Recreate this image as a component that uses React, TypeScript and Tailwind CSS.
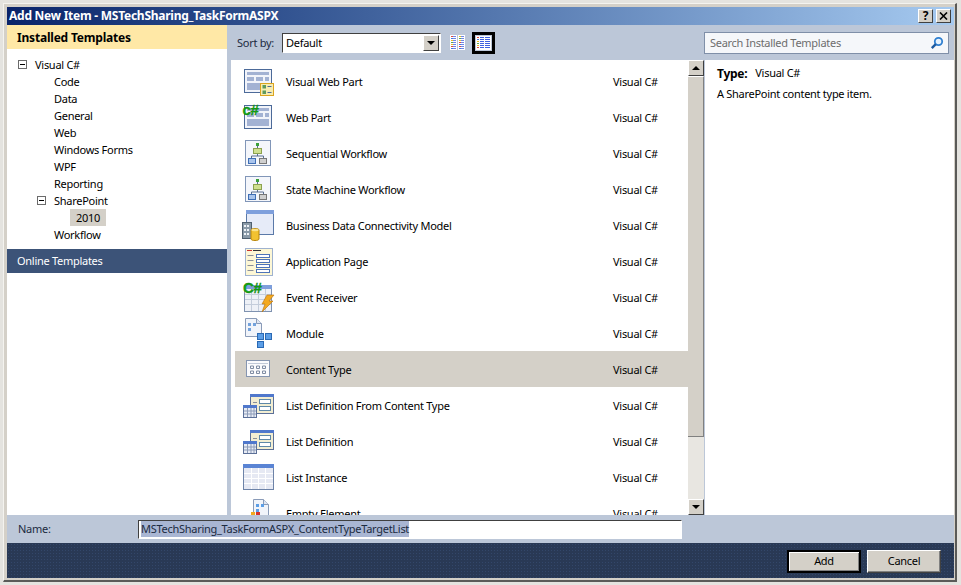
const font = "font-['Noto_Sans','Liberation_Sans',sans-serif]";

function Shell({ children }: { children: React.ReactNode }) {
  return (
    <svg width="32" height="32" viewBox="0 0 32 32" className="overflow-visible shrink-0">
      {children}
    </svg>
  );
}

function CSharp({ x = 0, y = 13, label = "c#" }: { x?: number; y?: number; label?: string }) {
  return (
    <text x={x} y={y} fontFamily="'Liberation Sans', sans-serif" fontWeight="700" fontSize="15" fill="#14a314" stroke="#0b7f0b" strokeWidth="0.3">
      {label}
    </text>
  );
}

function PartBody() {
  return (
    <>
      <rect x="1.5" y="4.5" width="27" height="23" fill="#f2f4fa" stroke="#4c6a99" />
      <rect x="4" y="7" width="22" height="3" fill="#a3b2d3" />
      <rect x="4" y="12" width="7" height="4" fill="#a3b2d3" />
      <rect x="13" y="12" width="7" height="4" fill="#a3b2d3" />
      <rect x="22" y="12" width="4" height="4" fill="#a3b2d3" />
      <rect x="4" y="18" width="22" height="7" fill="#a3b2d3" />
    </>
  );
}

function VisualWebPart() {
  return (
    <Shell>
      <PartBody />
      <rect x="17.5" y="18.5" width="13" height="12" fill="#f7ecb0" stroke="#dba41f" />
      <rect x="19.5" y="20" width="3.5" height="3.5" fill="#5e9a5e" />
      <rect x="19.5" y="25.5" width="3.5" height="3.5" fill="#5e9a5e" />
      <rect x="24.5" y="21" width="4" height="1" fill="#4c6a99" />
      <rect x="24.5" y="27" width="4" height="1" fill="#4c6a99" />
    </Shell>
  );
}

function WebPart() {
  return (
    <Shell>
      <PartBody />
      <CSharp x={-0.5} y={14} />
    </Shell>
  );
}

function Workflow() {
  return (
    <Shell>
      <rect x="2.5" y="3.5" width="25" height="25" fill="#f4f6fb" stroke="#8196b8" />
      <rect x="13" y="6" width="3" height="3" fill="#3aa03a" />
      <path d="M14.5 9v10M8.5 22v-3h12v3" fill="none" stroke="#5a6f90" />
      <rect x="10.5" y="11.5" width="8" height="5" fill="#cfe08f" stroke="#8ca24f" />
      <rect x="5.5" y="21.5" width="7" height="5" fill="#a9c4ec" stroke="#3f6fb5" />
      <rect x="16.5" y="21.5" width="7" height="5" fill="#cfcfcf" stroke="#777" />
    </Shell>
  );
}

function Bdc() {
  return (
    <Shell>
      <rect x="3.5" y="1.5" width="27" height="24" fill="#e6ebf8" stroke="#5a79a8" />
      <rect x="3" y="1" width="28" height="4" fill="#7e9fdc" />
      <rect x="-0.5" y="13.5" width="9" height="16" fill="#8a9aa8" stroke="#4f6070" />
      <rect x="1" y="16" width="2" height="2" fill="#eef2f6" />
      <rect x="4" y="16" width="2" height="2" fill="#eef2f6" />
      <rect x="1" y="20" width="2" height="2" fill="#eef2f6" />
      <rect x="4" y="20" width="2" height="2" fill="#eef2f6" />
      <rect x="1" y="24" width="2" height="2" fill="#eef2f6" />
      <rect x="4" y="24" width="2" height="2" fill="#eef2f6" />
      <path d="M8 21c0-2 8-2 8 0v9c0 2-8 2-8 0z" fill="#f2c230" stroke="#b8860b" />
      <ellipse cx="12" cy="21" rx="3.6" ry="1.2" fill="#fbe38a" />
    </Shell>
  );
}

function AppPage() {
  return (
    <Shell>
      <rect x="2.5" y="3.5" width="27" height="27" fill="#fdf7d5" stroke="#9fb2cf" />
      <rect x="4" y="5" width="5" height="1" fill="#c8342c" />
      <rect x="10" y="5" width="8" height="1" fill="#333" />
      <path d="M4.5 10.5h6M4.5 15.5h6M4.5 20.5h6M4.5 25.5h6" stroke="#8a8f9a" />
      <rect x="13.5" y="9.5" width="13" height="3" fill="#fff" stroke="#4e74b8" />
      <rect x="13.5" y="14.5" width="13" height="3" fill="#fff" stroke="#4e74b8" />
      <rect x="13.5" y="19.5" width="13" height="3" fill="#fff" stroke="#4e74b8" />
      <rect x="13.5" y="24.5" width="13" height="3" fill="#fff" stroke="#4e74b8" />
    </Shell>
  );
}

function EventReceiver() {
  return (
    <Shell>
      <rect x="1.5" y="4.5" width="27" height="26" fill="#eef1f7" stroke="#7f92b0" />
      <rect x="1" y="4" width="28" height="4" fill="#7e9fdc" />
      <path d="M2 13.5h26M2 18.5h26M2 23.5h26M8.5 8v22M15.5 8v22M22.5 8v22" stroke="#c4cddb" />
      <path d="M24 14h7l-5 6h4l-11 11 3-8h-3z" fill="#f3a91f" stroke="#b5700d" strokeWidth="0.6" />
      <CSharp x={0} y={12} label="C#" />
    </Shell>
  );
}

function Module() {
  return (
    <Shell>
      <path d="M2.5 1.5h11l5 5v13h-16z" fill="#f1f4fa" stroke="#8a9bb8" />
      <path d="M13.5 1.5v5h5" fill="#dfe6f2" stroke="#8a9bb8" />
      <rect x="5" y="6" width="3" height="3" fill="#73a2dc" />
      <rect x="10" y="6" width="3" height="3" fill="#73a2dc" />
      <rect x="5" y="11" width="3" height="3" fill="#73a2dc" />
      <rect x="14.5" y="16.5" width="6" height="6" fill="#5c9ee6" stroke="#2a69b4" />
      <rect x="22.5" y="16.5" width="6" height="6" fill="#5c9ee6" stroke="#2a69b4" />
      <rect x="14.5" y="24.5" width="6" height="6" fill="#5c9ee6" stroke="#2a69b4" />
    </Shell>
  );
}

function ContentTypeIcon() {
  return (
    <Shell>
      <rect x="3.5" y="7.5" width="23" height="16" fill="#fbfbfd" stroke="#8595b0" />
      <path d="M5 10.5h20" stroke="#c2cad8" />
      <path d="M7.5 13h3v2.5h-3zM13.5 13h3v2.5h-3zM19.5 13h3v2.5h-3zM7.5 18h3v2.5h-3zM13.5 18h3v2.5h-3zM19.5 18h3v2.5h-3z" fill="none" stroke="#7f8ca3" />
    </Shell>
  );
}

function ListDefinition() {
  return (
    <Shell>
      <rect x="7.5" y="5.5" width="23" height="19" fill="#f3eed2" stroke="#5c7098" />
      <rect x="7" y="5" width="24" height="3" fill="#5078cc" />
      <path d="M10 13.5h4M10 20.5h4" stroke="#8a8f9a" />
      <rect x="16.5" y="10.5" width="11" height="4" fill="#fff" stroke="#5f88a8" />
      <rect x="16.5" y="17.5" width="11" height="4" fill="#fff" stroke="#5f88a8" />
      <rect x="0.5" y="16.5" width="13" height="12" fill="#e8ecf5" stroke="#5c7098" />
      <rect x="0" y="16" width="14" height="3" fill="#5078cc" />
      <path d="M1 22h12M1 25h12M4.5 19v9M8 19v9M11 19v9" stroke="#8d9cb8" />
    </Shell>
  );
}

function ListInstance() {
  return (
    <Shell>
      <rect x="0.5" y="3.5" width="30" height="25" fill="#e6e9f3" stroke="#6d83a8" />
      <rect x="0" y="3" width="31" height="4" fill="#5a84d4" />
      <path d="M1 12.5h29M1 17.5h29M1 22.5h29M8.5 7v21M15.5 7v21M22.5 7v21" stroke="#fff" />
    </Shell>
  );
}

function EmptyElement() {
  return (
    <Shell>
      <path d="M10.5 2.5h10l5 5v20h-15z" fill="#f1f4fa" stroke="#8a9bb8" />
      <path d="M20.5 2.5v5h5" fill="#dfe6f2" stroke="#8a9bb8" />
      <rect x="13" y="7" width="3" height="3" fill="#5c9ee6" />
      <rect x="18" y="7" width="3" height="3" fill="#5c9ee6" />
      <rect x="13" y="12" width="3" height="3" fill="#5c9ee6" />
      <rect x="8" y="15" width="4" height="3" fill="#f3a91f" />
      <rect x="13" y="15" width="4" height="3" fill="#d8342c" />
    </Shell>
  );
}

const items = [
  { name: "Visual Web Part", icon: <VisualWebPart /> },
  { name: "Web Part", icon: <WebPart /> },
  { name: "Sequential Workflow", icon: <Workflow /> },
  { name: "State Machine Workflow", icon: <Workflow /> },
  { name: "Business Data Connectivity Model", icon: <Bdc /> },
  { name: "Application Page", icon: <AppPage /> },
  { name: "Event Receiver", icon: <EventReceiver /> },
  { name: "Module", icon: <Module /> },
  { name: "Content Type", icon: <ContentTypeIcon />, selected: true },
  { name: "List Definition From Content Type", icon: <ListDefinition /> },
  { name: "List Definition", icon: <ListDefinition /> },
  { name: "List Instance", icon: <ListInstance /> },
  { name: "Empty Element", icon: <EmptyElement /> },
];

function Minus() {
  return (
    <span className="w-[9px] h-[9px] border border-[#6b6b6b] bg-white flex items-center justify-center">
      <span className="w-[5px] h-px bg-black" />
    </span>
  );
}

function TreeRow({ label, indent, toggle, selected }: { label: string; indent: string; toggle?: boolean; selected?: boolean }) {
  return (
    <div className={`h-[17px] flex items-center ${indent}`}>
      {toggle && <span className="mr-[8px]"><Minus /></span>}
      <span className={selected ? "bg-[#d4d0c8] px-[6px] h-[17px] leading-[18px] -ml-[6px]" : "leading-[18px] h-[17px]"}>{label}</span>
    </div>
  );
}

function Raised({ className, children }: { className: string; children?: React.ReactNode }) {
  return (
    <div className={`bg-[#d4d0c8] border border-t-white border-l-white border-r-[#404040] border-b-[#404040] flex items-center justify-center ${className}`}>
      {children}
    </div>
  );
}

const rowColors = ["#e04a3c", "#4a78d8", "#e8c020", "#58a858", "#e8c020", "#e04a3c", "#4a78d8"];

// two narrow columns on white
function TileViewIcon() {
  return (
    <svg width="15" height="15" viewBox="0 0 15 15">
      <rect x="0" y="0" width="7" height="15" fill="#fff" />
      <rect x="8" y="0" width="7" height="15" fill="#fff" />
      {rowColors.map((c, i) => (
        <g key={i}>
          <rect x="1" y={1 + i * 2} width="2" height="1" fill={c} />
          <rect x="3" y={1 + i * 2} width="3" height="1" fill="#6d86e8" />
          <rect x="9" y={1 + i * 2} width="2" height="1" fill={rowColors[(i + 2) % 7]} />
          <rect x="11" y={1 + i * 2} width="3" height="1" fill="#6d86e8" />
        </g>
      ))}
    </svg>
  );
}

function ListViewIcon() {
  return (
    <svg width="15" height="14" viewBox="0 0 15 14">
      <rect x="0" y="0" width="15" height="14" fill="#fff" />
      {rowColors.slice(0, 6).map((c, i) => (
        <g key={i}>
          <rect x="1" y={1 + i * 2} width="2" height="1" fill={c} />
          <rect x="4" y={1 + i * 2} width="4" height="1" fill="#3f62e0" />
          <rect x="9" y={1 + i * 2} width="5" height="1" fill="#3f62e0" />
        </g>
      ))}
    </svg>
  );
}

export default function App() {
  return (
    <div className={`w-[961px] h-[585px] bg-[#e4e3df] pt-[3px] pl-[3px] pr-[4px] text-[11px] tracking-[-0.28px] text-black overflow-hidden ${font}`}>
      <div className="h-[579px] bg-[#d4d0c8] border-l border-t border-l-[#f4f3ef] border-t-[#f4f3ef] border-r-2 border-b-2 border-r-[#5a5a58] border-b-[#5a5a58] pt-[3px] pl-[3px] pr-[1px] pb-[2px] flex flex-col">
        {/* title bar */}
        <div className="h-[18px] shrink-0 bg-gradient-to-r from-[#0a246a] to-[#a6caf0] flex items-center justify-between pl-[2px] pr-[3px]">
          <span className="font-bold text-white text-[12px] tracking-[-0.25px]">Add New Item - MSTechSharing_TaskFormASPX</span>
          <div className="flex gap-[3px]">
            <Raised className="w-[15px] h-[14px] font-bold text-[12px] leading-none">?</Raised>
            <Raised className="w-[15px] h-[14px]">
              <svg width="9" height="8" viewBox="0 0 9 8">
                <path d="M1 0.5l7 7M8 0.5l-7 7" stroke="#000" strokeWidth="1.6" />
              </svg>
            </Raised>
          </div>
        </div>

        <div className="flex-1 min-h-0 bg-[#bcc7d8] flex flex-col">
          <div className="h-[490px] flex">
            {/* left panel */}
            <div className="w-[220px] shrink-0 bg-white flex flex-col">
              <div className="h-[24px] shrink-0 bg-[#ffe8a6] pl-[10px] pt-[1px] flex items-center font-bold text-[12px] tracking-[-0.2px]">Installed Templates</div>
              <div className="h-[200px] shrink-0 pt-[7px]">
                <TreeRow label="Visual C#" indent="pl-[11px]" toggle />
                <TreeRow label="Code" indent="pl-[47px]" />
                <TreeRow label="Data" indent="pl-[47px]" />
                <TreeRow label="General" indent="pl-[47px]" />
                <TreeRow label="Web" indent="pl-[47px]" />
                <TreeRow label="Windows Forms" indent="pl-[47px]" />
                <TreeRow label="WPF" indent="pl-[47px]" />
                <TreeRow label="Reporting" indent="pl-[47px]" />
                <TreeRow label="SharePoint" indent="pl-[30px]" toggle />
                <TreeRow label="2010" indent="pl-[69px]" selected />
                <TreeRow label="Workflow" indent="pl-[47px]" />
              </div>
              <div className="h-[24px] shrink-0 bg-[#3c5378] text-white pl-[10px] flex items-center">Online Templates</div>
            </div>

            {/* center */}
            <div className="w-[473px] shrink-0 ml-[4px] flex flex-col">
              <div className="h-[35px] shrink-0 flex items-center pl-[6px] text-[#1b2a40]">
                <span className="w-[45px] pt-px">Sort by:</span>
                <div className="w-[159px] h-[20px] bg-white border border-t-[#404040] border-l-[#404040] border-r-white border-b-white flex items-center justify-between pl-[3px] pr-px text-black">
                  <span className="pt-px">Default</span>
                  <Raised className="w-[16px] h-[16px]">
                    <span className="w-0 h-0 border-x-[4px] border-x-transparent border-t-[4px] border-t-black" />
                  </Raised>
                </div>
                <div className="ml-[9px] w-[15px] flex items-center justify-center">
                  <TileViewIcon />
                </div>
                <div className="ml-[7px] w-[23px] h-[22px] bg-[#bcc7d8] border-[3px] border-black flex items-center justify-center">
                  <ListViewIcon />
                </div>
              </div>
              <div className="flex-1 min-h-0 flex bg-white">
                <div className="flex-1 min-w-0 overflow-hidden pl-[4px] pt-[3px]">
                  {items.map((item) => (
                    <div key={item.name} className={`h-[36px] shrink-0 flex items-center pl-[8px] ${item.selected ? "bg-[#d4d0c8]" : ""}`}>
                      {item.icon}
                      <span className="ml-[11px] w-[327px] pt-[2px]">{item.name}</span>
                      <span className="pt-[2px]">Visual C#</span>
                    </div>
                  ))}
                </div>
                {/* scrollbar */}
                <div className="w-[16px] shrink-0 bg-[#e8e6e1] flex flex-col justify-between">
                  <div className="flex flex-col">
                    <Raised className="w-[16px] h-[16px]">
                      <span className="w-0 h-0 border-x-[4px] border-x-transparent border-b-[4px] border-b-black" />
                    </Raised>
                    <div className="h-[361px] bg-[#d4d0c8] border-b border-r border-[#808080] border-t border-t-white" />
                  </div>
                  <Raised className="w-[16px] h-[16px]">
                    <span className="w-0 h-0 border-x-[4px] border-x-transparent border-t-[4px] border-t-black" />
                  </Raised>
                </div>
              </div>
            </div>

            {/* details */}
            <div className="w-[249px] shrink-0 ml-px flex flex-col">
              <div className="h-[35px] shrink-0 flex items-center">
                <div className="-ml-px w-[245px] h-[22px] bg-[#f5f7fa] border border-[#7f8fa8] flex items-center justify-between pl-[5px] pr-[4px] text-[#6d6d6d]">
                  <span className="pt-px">Search Installed Templates</span>
                  <svg width="14" height="14" viewBox="0 0 14 14">
                    <circle cx="8.5" cy="5.5" r="3.7" fill="#e8f2fc" stroke="#2f7fd0" strokeWidth="1.8" />
                    <path d="M5.8 8.2L1.8 12.2" stroke="#1c5aa0" strokeWidth="2.4" />
                  </svg>
                </div>
              </div>
              <div className="flex-1 bg-white pl-[12px] pt-[5px]">
                <div className="h-[17px] flex items-center">
                  <span className="font-bold text-[12px]">Type:</span>
                  <span className="ml-[8px]">Visual C#</span>
                </div>
                <div className="mt-[4px] h-[17px] flex items-center">A SharePoint content type item.</div>
              </div>
            </div>
          </div>

          {/* name row */}
          <div className="h-[28px] shrink-0 flex items-center pl-[11px] text-[#1b2a40]">
            <span className="w-[120px]">Name:</span>
            <div className="w-[544px] h-[19px] bg-white border border-t-[#404040] border-l-[#404040] border-r-white border-b-white flex items-center pl-[2px] pr-0 text-[#1b2a40]">
              <span className="bg-[#a9b6d3]">MSTechSharing_TaskFormASPX_ContentTypeTargetList</span>
            </div>
          </div>

          {/* footer */}
          <div className="h-[35px] shrink-0 bg-[#293955] bg-[radial-gradient(circle,#33476a_1px,transparent_1px)] bg-[length:3px_3px] flex items-center justify-end gap-[6px] pr-[13px] pt-[1px]">
            <button className="w-[74px] h-[23px] bg-[#d4d0c8] border-2 border-black shadow-[inset_1px_1px_0_#fff,inset_-1px_-1px_0_#808080]">Add</button>
            <button className="w-[74px] h-[23px] bg-[#d4d0c8] border border-t-white border-l-white border-r-[#404040] border-b-[#404040] shadow-[inset_-1px_-1px_0_#808080]">Cancel</button>
          </div>
        </div>
      </div>
    </div>
  );
}
